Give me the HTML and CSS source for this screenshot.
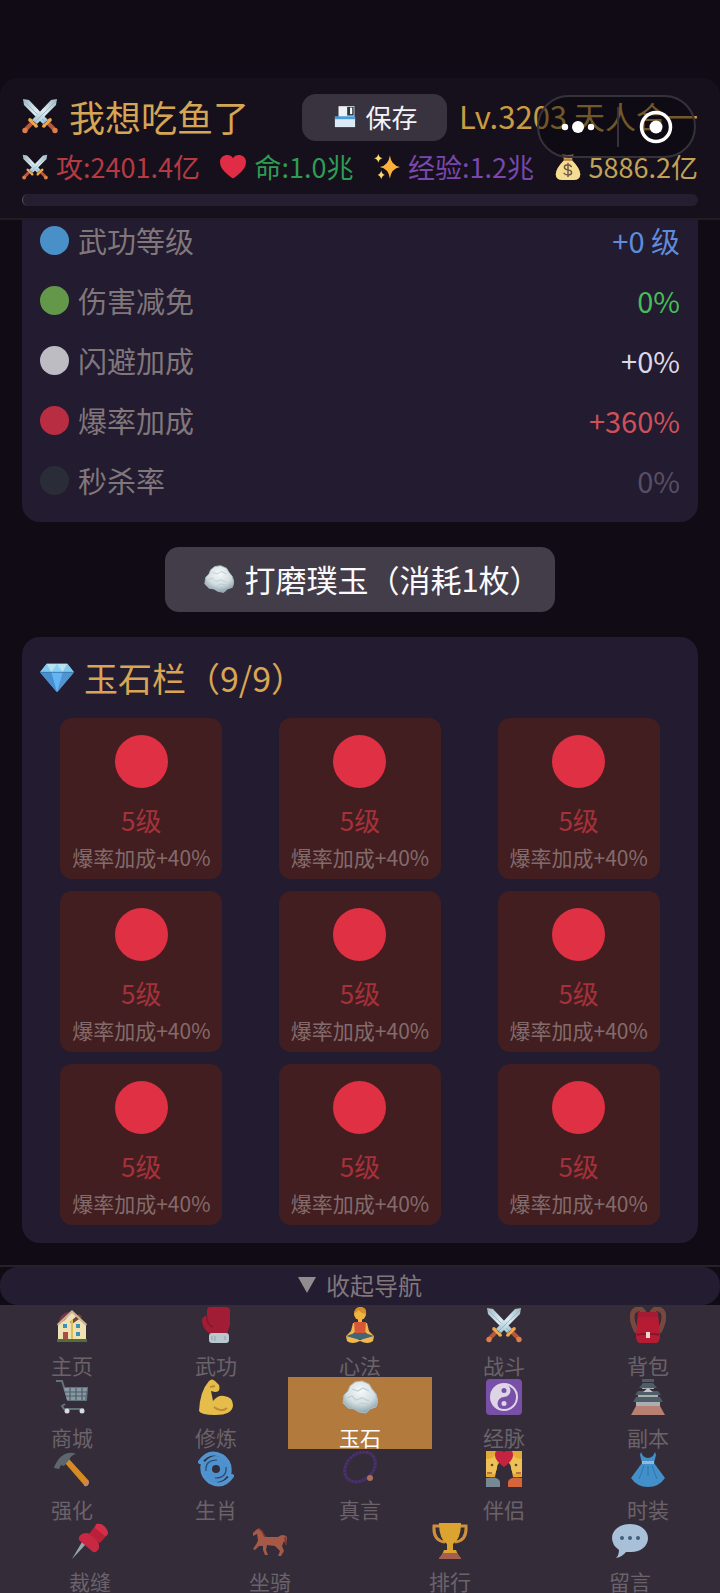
FILE: index.html
```html
<!DOCTYPE html>
<html lang="zh-CN">
<head>
<meta charset="utf-8">
<meta name="viewport" content="width=device-width, initial-scale=1">
<title>玉石</title>
<link rel="stylesheet" href="styles.css">
</head>
<body>
<svg class="sprite" aria-hidden="true">
  <defs>
    <linearGradient id="blade" x1="0" y1="0" x2="1" y2="1"><stop offset="0" stop-color="#9fb8c4"/><stop offset=".5" stop-color="#dcebf1"/><stop offset="1" stop-color="#9cc0cf"/></linearGradient>
    <radialGradient id="stone" cx=".5" cy=".3" r=".7"><stop offset="0" stop-color="#f6f9fa"/><stop offset=".6" stop-color="#d3dde0"/><stop offset="1" stop-color="#8ba3ac"/></radialGradient>
  </defs>
  <symbol id="i-swords" viewBox="0 0 36 36">
    <g id="sword">
      <path d="M1 1l6 1 19 20-5 4L2 7z" fill="url(#blade)"/>
      <path d="M2 3l21 21" stroke="#9cb5c0" stroke-width="1"/>
      <path d="M26 25l6 6" stroke="#b9573a" stroke-width="4"/>
      <path d="M29 20q2 3-1 4l-4 4q-1 3-4 1 0-3 3-4l2-2q1-3 4-3z" fill="#f0a94a"/>
      <circle cx="33" cy="32.500" r="2.700" fill="#dc7d4a"/>
    </g>
    <use href="#sword" transform="matrix(-1 0 0 1 36 0)"/>
  </symbol>
  <symbol id="i-floppy" viewBox="0 0 36 36">
    <path d="M9 3h22v16H9z" fill="#eef2f5"/><path d="M21 4h9v12h-9z" fill="#273746"/><path d="M25 5h3v9h-3z" fill="#fff"/><path d="M4 18h28v14H4z" fill="#dceaf5"/><path d="M4 17h28v4H4z" fill="#4a9bdc"/>
  </symbol>
  <symbol id="i-heart" viewBox="0 0 36 36"><path d="M18 34C8 27 0 20 0 11 0 1 14-2 18 6 22-2 36 1 36 11c0 9-8 16-18 23z" fill="#e02d45"/></symbol>
  <symbol id="i-sparkle" viewBox="0 0 36 36"><path d="M22 2q2 14 14 16-12 2-14 16-2-14-14-16 12-2 14-16z" fill="#ffb03a"/><path d="M6 0q1 5 6 6-5 1-6 6-1-5-6-6 5-1 6-6zM10 23q1 5 5 6-4 1-5 6-1-5-5-6 4-1 5-6z" fill="#fadb70"/></symbol>
  <symbol id="i-bag" viewBox="0 0 36 36"><path d="M10 0q8 3 16 0l-3 9H13z" fill="#d8a566"/><path d="M13 8h10q12 12 12 20 0 8-9 8H10q-9 0-9-8Q1 20 13 8z" fill="#f5dc90"/><path d="M12 8h12" stroke="#b78145" stroke-width="3"/><path d="M23 18q-2-3-5-3-5 0-5 3.500 0 3 5 3.500 5 .5 5 4 0 3-5 3-4 0-6-3M18 12v20" fill="none" stroke="#6c5948" stroke-width="2"/></symbol>
  <symbol id="i-rock" viewBox="0 0 36 36"><path d="M8 7l5-4 7-1 7 3 3 5 4 5 2 7-2 6-6 2-4 4-7-1-5-3-6-1-5-5 1-8 4-4z" fill="url(#stone)" stroke="#a9bcc4" stroke-linejoin="round"/><path d="M10 10l6 2 5-3 6 3M5 19l5-2 4 4 6-2 7 3M14 27l6-3 6 1" fill="none" stroke="#c0ced3" stroke-width="1.200"/></symbol>
  <symbol id="i-gem" viewBox="0 0 36 36"><path d="M7 3h22l7 9-18 21L0 12z" fill="#64b5f6"/><path d="M7 3l5 9H0zM29 3l-5 9h12z" fill="#83c8ed"/><path d="M7 3h22l-5 9H12z" fill="#b7e2f4"/><path d="M12 12l6-9 6 9z" fill="#8bd0f2"/><path d="M0 12h12l6 21z" fill="#468fd0"/><path d="M36 12H24l-6 21z" fill="#5294cf"/><path d="M0 12h36" fill="none" stroke="#3677a9"/></symbol>
  <symbol id="i-home" viewBox="0 0 36 36"><path d="M4 17L18 5l14 12v16H4z" fill="#eee2b5"/><path d="M4 17l3-8 4-3 7-2-7 9z" fill="#7d3443"/><path d="M16 15l9-8 3 3-10 7z" fill="#75453d"/><path d="M18 3l15 14-1 2L18 6 4 19l-1-2z" fill="#c8b394"/><path d="M9 17h4v4H9zM22 17h4v4h-4zM22 25h4v4h-4z" fill="#3d91b5"/><path d="M9 25h5v8H9z" fill="#a84f3d"/><path d="M3 32h30v3H3z" fill="#536c38"/><path d="M18 13v19" stroke="#e5bb55" stroke-width="2"/></symbol>
  <symbol id="i-glove" viewBox="0 0 36 36"><path d="M12 0h16q4 0 4 4v14l-3 9H12Q4 21 4 14q0-5 5-5V4q0-4 3-4z" fill="#a11c35"/><path d="M9 9q-1 8 6 11" fill="none" stroke="#83172d" stroke-width="1.500"/><rect x="11" y="26" width="20" height="10" rx="3" fill="#b9c8ce"/><path d="M14 29v4M17 29v5M27 29v4" stroke="#91a3ab"/></symbol>
  <symbol id="i-yoga" viewBox="0 0 36 36"><circle cx="18" cy="7" r="6" fill="#eeb640"/><path d="M12 6q1-7 8-6 5 1 4 7-5-1-8-4-1 3-4 3z" fill="#d88e2a"/><path d="M16 12h4v6h-4zM11 16h3l-1 9-6 6-3-2 5-5zM22 16h3l2 8 5 5-3 2-6-6z" fill="#efb64a"/><path d="M12 15h12l-1 13H13z" fill="#d65838"/><path d="M13 26h10l9 3-3 6-11-3-11 3-3-6z" fill="#426578"/><path d="M4 29l14 4 14-4-1 5q-5 4-13 0-8 4-13 0z" fill="#f0b84d"/></symbol>
  <symbol id="i-pack" viewBox="0 0 36 36"><path d="M7 25Q-1 10 4 4 11-2 15 8M29 25Q37 10 32 4 25-2 21 8" fill="none" stroke="#78483f" stroke-width="5"/><path d="M8 5h20l2 23q0 8-4 8H10q-4 0-4-8z" fill="#b51c34"/><path d="M8 5h20v5H8z" fill="#a31c34"/><path d="M11 27h14l4 1M7 28l4-1" fill="none" stroke="#7b1429" stroke-width="1.500"/><path d="M16 25h4v6h-4z" fill="#f2d3d5"/></symbol>
  <symbol id="i-cart" viewBox="0 0 36 36"><path d="M2 2h6l6 19h18l1-12H10M11 25l-3 2 2 3h20" fill="none" stroke="#63727a" stroke-width="2"/><path d="M10 9h23l-2 12H13z" fill="#879aa4"/><path d="M16 9v12M22 9v12M28 9v12M11 13h22M12 17h20" stroke="#4f5d68" stroke-width="1.200"/><circle cx="13" cy="32" r="2.500" fill="#d8dadd"/><circle cx="28" cy="32" r="2.500" fill="#d8dadd"/></symbol>
  <symbol id="i-arm" viewBox="0 0 36 36"><path d="M1 32Q2 12 11 2q3-3 6 0l4 4q2 7-4 7l-4-1 2 10q5-6 11-5 9 1 9 9 0 10-18 10Q3 36 1 32z" fill="#e6bd4a"/><path d="M16 28q7 6 13 1M12 8l5-1" fill="none" stroke="#c08a35" stroke-width="2"/></symbol>
  <symbol id="i-yin" viewBox="0 0 36 36"><rect width="36" height="36" rx="4" fill="#7950a7"/><circle cx="18" cy="18" r="13" fill="#7950a7" stroke="#ddd5e5" stroke-width="2"/><path d="M18 5A13 13 0 0 0 18 31 6.500 6.500 0 0 1 18 18 6.500 6.500 0 0 0 18 5z" fill="#ddd5e5"/><circle cx="18" cy="11.500" r="2.500" fill="#7950a7"/><circle cx="18" cy="24.500" r="2.500" fill="#ddd5e5"/></symbol>
  <symbol id="i-castle" viewBox="0 0 36 36"><path d="M6 27h24l5 9H1z" fill="#b88072"/><path d="M6 22h24v5H6zM8 15h20v4H8zM12 5h12v5H12z" fill="#a8aeb1"/><path d="M3 23l3-5h24l3 5zM5 16l3-4h20l3 4zM9 9l4-5h10l4 5zM12 0h12v3H12z" fill="#4e5d66"/><path d="M13 13l5-4 5 4z" fill="#c0c4c5"/></symbol>
  <symbol id="i-hammer" viewBox="0 0 36 36"><path d="M11 12l4-4 20 22q0 5-5 4z" fill="#d68a22"/><path d="M32 29l3 2q0 5-5 4z" fill="#c48570"/><path d="M1 14L4 9Q12-1 22 3q-5 1-7 6l-5 6-3-1-2 4-5-1z" fill="#5d666c"/></symbol>
  <symbol id="i-cyclone" viewBox="0 0 36 36"><path d="M2 11Q11-2 24 5q10 7 7 19M34 25Q25 38 12 31 2 24 5 12" fill="none" stroke="#5294cf" stroke-width="4" stroke-linecap="round"/><circle cx="18" cy="18" r="8.500" fill="none" stroke="#4d91cf" stroke-width="9"/><path d="M8 20q-1-11 11-11M28 16q1 11-11 11" fill="none" stroke="#284868" stroke-width="1.200"/></symbol>
  <symbol id="i-beads" viewBox="0 0 36 36"><ellipse cx="18" cy="16" rx="17" ry="13" transform="rotate(-42 18 16)" fill="none" stroke="#4b2f70" stroke-width="3" stroke-dasharray="3 .6"/><circle cx="28" cy="27" r="3" fill="#aa7058"/></symbol>
  <symbol id="i-couple" viewBox="0 0 36 36"><path d="M0 0h12q4 9-1 15l-2 11H0zM36 0H24q-4 9 1 15l2 11h9z" fill="#e3ab36"/><path d="M0 8q8 0 9-5 5 9 0 20H0zM36 8q-8 0-9-5-5 9 0 20h9z" fill="#efc056"/><path d="M0 27q13-2 14 4v5H0z" fill="#788895"/><path d="M36 27q-13-2-14 4v5h14z" fill="#d7653b"/><path d="M18 16Q8 9 9 3q1-7 9-2 8-5 9 2 1 6-9 13z" fill="#c42442"/><circle cx="6" cy="14" r="1.300" fill="#5d4635"/><circle cx="30" cy="14" r="1.300" fill="#5d4635"/><path d="M1 22h5M30 22h5" stroke="#9e5d42" stroke-width="1.500"/></symbol>
  <symbol id="i-dress" viewBox="0 0 36 36"><path d="M11 1l2 4q5 4 10 0l2-4 1 3-2 8 11 15Q29 36 18 36T1 27l11-15-2-8z" fill="#438fc9"/><path d="M12 10h12v3H12z" fill="#8ebbd3"/><path d="M14 15l-5 13M18 15v10M22 15l5 13" stroke="#2d76af" stroke-width="1"/></symbol>
  <symbol id="i-pin" viewBox="0 0 36 36"><path d="M14 21L1 35 0 36 10 19z" fill="#91a8b1"/><path d="M10 11q6-3 11 2 7 5 6 12-2 5-6 4L7 17q-1-4 3-6z" fill="#c92842"/><path d="M17 11l7-9q7 0 12 9l-8 9z" fill="#ba2139"/><path d="M24 1q8-2 12 8 0 4-3 4L23 5z" fill="#d52e48"/></symbol>
  <symbol id="i-horse" viewBox="0 0 36 36"><path d="M1 10l3-3 3-2 3 3 4 6 12 0q5-4 9 0l-1 8-2-4-2 5 2 5-3 5h-3l2-5-5-5-8-1-1 5 2 5h-3l-2-5v-4l-4 0-4 4-2-1 4-6 1-3-1-6-4 2z" fill="#a75947"/><path d="M6 5l4 3 3 6M33 14l1 8" fill="none" stroke="#74382f" stroke-width="1.500"/></symbol>
  <symbol id="i-cup" viewBox="0 0 36 36"><path d="M8 3H2q-1 15 11 16M28 3h6q1 15-11 16" fill="none" stroke="#cf913d" stroke-width="3"/><path d="M7 0h22q0 16-8 21v6h3l2 5H10l2-5h3v-6Q7 16 7 0z" fill="#dba431"/><path d="M11 30h14l4 5v1H7v-1z" fill="#a65d51"/></symbol>
  <symbol id="i-chat" viewBox="0 0 36 36"><path d="M18 1c10 0 18 6 18 14s-7 14-17 14h-5q-4 5-10 6 3-3 3-8Q0 22 0 15C0 7 8 1 18 1z" fill="#a9c0d9"/><circle cx="10" cy="15" r="2" fill="#3f5d7e"/><circle cx="18" cy="15" r="2" fill="#3f5d7e"/><circle cx="26" cy="15" r="2" fill="#3f5d7e"/></symbol>
</svg>

<header class="header">
  <div class="identity">
    <h1 class="player"><svg class="icon-lg"><use href="#i-swords"/></svg>我想吃鱼了</h1>
    <button class="save" type="button"><svg class="icon-sm"><use href="#i-floppy"/></svg>保存</button>
    <span class="level">Lv.3203 天人合一</span>
  </div>
  <div class="stats">
    <span class="stat attack"><svg class="icon-sm"><use href="#i-swords"/></svg>攻:2401.4亿</span>
    <span class="stat life"><svg class="icon-sm"><use href="#i-heart"/></svg>命:1.0兆</span>
    <span class="stat exp"><svg class="icon-sm"><use href="#i-sparkle"/></svg>经验:1.2兆</span>
    <span class="stat gold"><svg class="icon-sm"><use href="#i-bag"/></svg>5886.2亿</span>
  </div>
  <div class="progress" role="progressbar" aria-label="经验" aria-valuenow="0" aria-valuemin="0" aria-valuemax="100"></div>
  <div class="capsule">
    <button type="button" class="capsule-button" aria-label="更多"><svg class="dots" viewBox="0 0 34 14"><circle cx="4" cy="7" r="3.200"/><circle cx="17" cy="7" r="6"/><circle cx="30" cy="7" r="3.200"/></svg></button>
    <button type="button" class="capsule-button capsule-close" aria-label="关闭"><svg class="target" viewBox="0 0 34 34"><circle cx="17" cy="17" r="14.500" fill="none" stroke="#fff" stroke-width="3.500"/><circle cx="17" cy="17" r="6.500"/></svg></button>
  </div>
</header>

<main class="content">
  <section class="card bonuses">
    <dl class="bonus-list">
      <div class="bonus"><dt><i class="dot blue"></i>武功等级</dt><dd class="text-blue">+0 级</dd></div>
      <div class="bonus"><dt><i class="dot green"></i>伤害减免</dt><dd class="text-green">0%</dd></div>
      <div class="bonus"><dt><i class="dot white"></i>闪避加成</dt><dd class="text-white">+0%</dd></div>
      <div class="bonus"><dt><i class="dot red"></i>爆率加成</dt><dd class="text-red">+360%</dd></div>
      <div class="bonus"><dt><i class="dot black"></i>秒杀率</dt><dd class="text-muted">0%</dd></div>
    </dl>
  </section>

  <button class="polish" type="button"><svg class="icon-md"><use href="#i-rock"/></svg>打磨璞玉（消耗1枚）</button>

  <section class="card jades">
    <h2 class="card-title"><svg class="icon-gem"><use href="#i-gem"/></svg>玉石栏（9/9）</h2>
    <ul class="slots">
      <li class="slot"><i class="jade"></i><span class="slot-level">5级</span><span class="slot-bonus">爆率加成+40%</span></li>
      <li class="slot"><i class="jade"></i><span class="slot-level">5级</span><span class="slot-bonus">爆率加成+40%</span></li>
      <li class="slot"><i class="jade"></i><span class="slot-level">5级</span><span class="slot-bonus">爆率加成+40%</span></li>
      <li class="slot"><i class="jade"></i><span class="slot-level">5级</span><span class="slot-bonus">爆率加成+40%</span></li>
      <li class="slot"><i class="jade"></i><span class="slot-level">5级</span><span class="slot-bonus">爆率加成+40%</span></li>
      <li class="slot"><i class="jade"></i><span class="slot-level">5级</span><span class="slot-bonus">爆率加成+40%</span></li>
      <li class="slot"><i class="jade"></i><span class="slot-level">5级</span><span class="slot-bonus">爆率加成+40%</span></li>
      <li class="slot"><i class="jade"></i><span class="slot-level">5级</span><span class="slot-bonus">爆率加成+40%</span></li>
      <li class="slot"><i class="jade"></i><span class="slot-level">5级</span><span class="slot-bonus">爆率加成+40%</span></li>
    </ul>
  </section>
</main>

<footer class="footer">
  <button class="collapse" type="button"><svg class="arrow" viewBox="0 0 18 16"><path d="M0 0h18L9 16z"/></svg>收起导航</button>
  <nav class="nav">
    <a class="tab" href="#"><svg class="icon-lg"><use href="#i-home"/></svg>主页</a>
    <a class="tab" href="#"><svg class="icon-lg"><use href="#i-glove"/></svg>武功</a>
    <a class="tab" href="#"><svg class="icon-lg"><use href="#i-yoga"/></svg>心法</a>
    <a class="tab" href="#"><svg class="icon-lg"><use href="#i-swords"/></svg>战斗</a>
    <a class="tab" href="#"><svg class="icon-lg"><use href="#i-pack"/></svg>背包</a>
    <a class="tab" href="#"><svg class="icon-lg"><use href="#i-cart"/></svg>商城</a>
    <a class="tab" href="#"><svg class="icon-lg"><use href="#i-arm"/></svg>修炼</a>
    <a class="tab active" href="#" aria-current="page"><svg class="icon-lg"><use href="#i-rock"/></svg>玉石</a>
    <a class="tab" href="#"><svg class="icon-lg"><use href="#i-yin"/></svg>经脉</a>
    <a class="tab" href="#"><svg class="icon-lg"><use href="#i-castle"/></svg>副本</a>
    <a class="tab" href="#"><svg class="icon-lg"><use href="#i-hammer"/></svg>强化</a>
    <a class="tab" href="#"><svg class="icon-lg"><use href="#i-cyclone"/></svg>生肖</a>
    <a class="tab" href="#"><svg class="icon-lg"><use href="#i-beads"/></svg>真言</a>
    <a class="tab" href="#"><svg class="icon-lg"><use href="#i-couple"/></svg>伴侣</a>
    <a class="tab" href="#"><svg class="icon-lg"><use href="#i-dress"/></svg>时装</a>
    <a class="tab wide" href="#"><svg class="icon-lg"><use href="#i-pin"/></svg>裁缝</a>
    <a class="tab wide" href="#"><svg class="icon-lg"><use href="#i-horse"/></svg>坐骑</a>
    <a class="tab wide" href="#"><svg class="icon-lg"><use href="#i-cup"/></svg>排行</a>
    <a class="tab wide" href="#"><svg class="icon-lg"><use href="#i-chat"/></svg>留言</a>
  </nav>
</footer>
</body>
</html>
```

FILE: styles.css
```css
* { box-sizing: border-box; margin: 0; padding: 0; }
body {
  min-height: 100vh;
  display: flex;
  flex-direction: column;
  padding-top: 78px;
  background: #110b15;
  color: #81777b;
  font-family: "Noto Sans CJK SC", sans-serif;
  font-weight: 400;
}
button { border: 0; font: inherit; color: inherit; background: none; cursor: pointer; }
ul { list-style: none; }
svg { flex: none; display: block; }
.sprite { position: absolute; width: 0; height: 0; }
.icon-sm { width: 26px; height: 26px; }
.icon-md { width: 30px; height: 30px; }
.icon-lg { width: 36px; height: 36px; }
.icon-gem { width: 34px; height: 34px; }

.header {
  position: relative;
  padding: 16px 22px 12px;
  background: #15101c;
  border-bottom: 2px solid #221c25;
  border-radius: 18px 18px 0 0;
}
.identity { display: flex; align-items: center; height: 47px; white-space: nowrap; }
.player { display: flex; align-items: center; gap: 11px; font-size: 36px; font-weight: 400; color: #d5a556; line-height: 44px; padding-bottom: 3px; }
.save {
  display: flex;
  align-items: center;
  justify-content: center;
  gap: 8px;
  width: 145px;
  height: 47px;
  padding-bottom: 2px;
  margin-left: auto;
  margin-right: 12px;
  border-radius: 14px;
  background: #393340;
  color: #f4f2f5;
  font-size: 26px;
}
.level { font-size: 31px; line-height: 44px; padding-bottom: 3px; color: #c99c42; }
.stats { display: flex; justify-content: space-between; margin-top: 8px; margin-bottom: 9px; white-space: nowrap; }
.stat { display: flex; align-items: center; gap: 8px; font-size: 27px; line-height: 36px; }
.attack { color: #b53a42; }
.life { color: #2f9c54; }
.exp { color: #7a48ad; }
.gold { color: #c0a356; }
.progress { height: 12px; border-radius: 6px; background: #251e30; border-left: 1px solid #55505c; }

.capsule {
  position: absolute;
  top: 17px;
  right: 24px;
  width: 159px;
  height: 63px;
  display: grid;
  grid-template-columns: 1fr 1fr;
  align-items: center;
  border: 2px solid #35323a;
  border-radius: 32px;
  background: rgba(7, 6, 12, 0.45);
}
.capsule-button { height: 40px; display: grid; place-items: center; }
.capsule-close { border-left: 2px solid #35323a; }
.dots { width: 34px; height: 14px; fill: #fff; }
.target { width: 34px; height: 34px; fill: #fff; }

.content { flex: 1; display: flex; flex-direction: column; align-items: center; gap: 25px; padding: 0 22px 22px; }
.card { width: 100%; border-radius: 18px; background: #231b2f; }
.bonuses { padding: 0 18px 22px; border-radius: 0 0 18px 18px; }
.bonus-list { display: flex; flex-direction: column; gap: 20px; }
.bonus { display: flex; justify-content: space-between; font-size: 29px; line-height: 40px; }
.bonus dt { display: flex; align-items: center; gap: 9px; }
.dot { width: 29px; height: 29px; border-radius: 50%; }
.blue { background: #4990c8; }
.green { background: #63984b; }
.white { background: #bdbcc3; }
.red { background: #b92d43; }
.black { background: #2a2d37; }
.text-blue { color: #5e8bdc; }
.text-green { color: #45bd58; }
.text-white { color: #dcd7e2; }
.text-red { color: #cf5059; }
.text-muted { color: #594f63; }

.polish {
  display: flex;
  align-items: center;
  gap: 10px;
  height: 65px;
  padding: 0 14px 2px 39px;
  border-radius: 14px;
  background: #433c49;
  color: #faf9fb;
  font-size: 31px;
  white-space: nowrap;
}

.jades { padding: 17px 10px 18px; }
.card-title { display: flex; align-items: center; gap: 10px; padding: 0 8px; font-size: 34px; font-weight: 400; line-height: 48px; color: #d9a453; }
.slots { display: grid; grid-template-columns: repeat(3, 1fr); justify-items: center; gap: 12px 0; margin-top: 16px; }
.slot { display: flex; flex-direction: column; align-items: center; width: 162px; padding: 17px 0 7px; border-radius: 12px; background: #421e20; white-space: nowrap; }
.jade { width: 53px; height: 53px; border-radius: 50%; background: #df3044; }
.slot-level { margin-top: 12px; font-size: 26px; line-height: 40px; color: #a5313a; }
.slot-bonus { margin-top: 2px; font-size: 21px; line-height: 30px; color: #836b6b; }

.footer { border-top: 2px solid #282129; }
.collapse {
  display: flex;
  align-items: center;
  justify-content: center;
  gap: 10px;
  width: 100%;
  height: 38px;
  padding-bottom: 3px;
  border-radius: 18px;
  background: #241c30;
  font-size: 24px;
}
.arrow { width: 18px; height: 16px; fill: #928c8f; }
.nav { display: grid; grid-template-columns: repeat(20, 1fr); background: #342d39; }
.tab {
  grid-column: span 4;
  display: flex;
  flex-direction: column;
  align-items: center;
  gap: 10px;
  height: 72px;
  padding-top: 2px;
  font-size: 21px;
  line-height: 24px;
  color: #6b626a;
  text-decoration: none;
}
.wide { grid-column: span 5; }
.active { background: #b37a3d; color: #fff; }
```
